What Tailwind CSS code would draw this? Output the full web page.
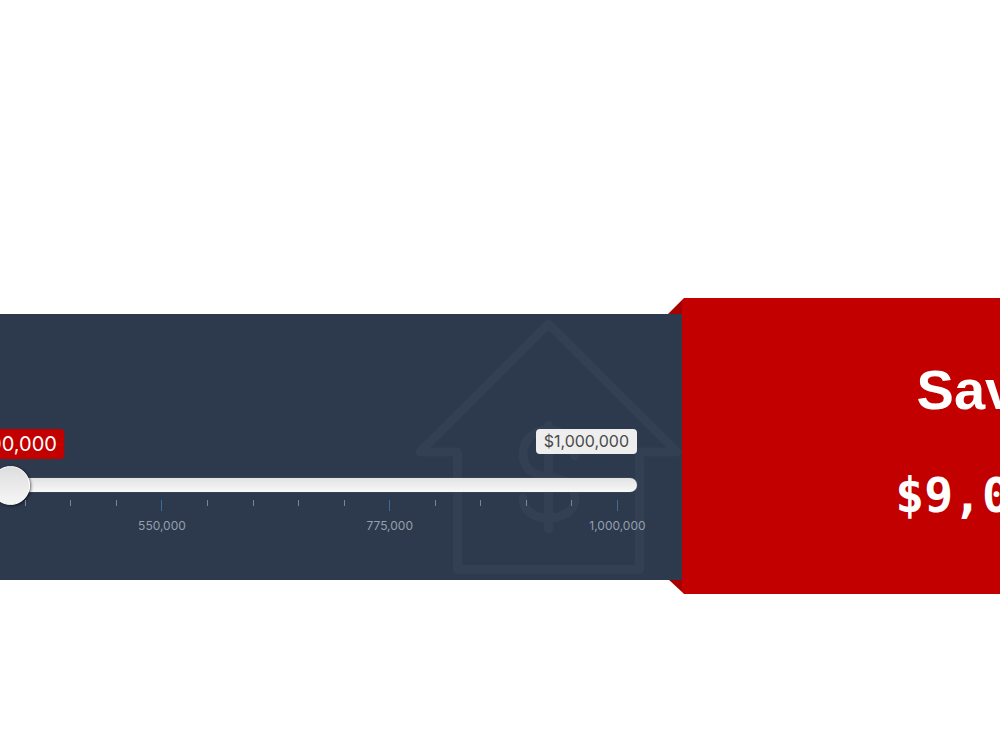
<!DOCTYPE html>
<html lang="en">
<head>
  <meta charset="UTF-8" />
  <meta name="viewport" content="width=device-width, initial-scale=1" />
  <title>Savings calculator</title>
  <script src="https://cdn.jsdelivr.net/npm/@tailwindcss/browser@4"></script>
</head>

<body class="bg-white font-['Inter',sans-serif]">
  <main class="min-h-screen overflow-hidden pt-[298px]">
    <div class="grid grid-cols-[682fr_318fr]">

      <!-- Slider panel -->
      <section class="relative z-10 my-4 -mb-px min-w-0 self-start bg-[#2d394c]">
        <div class="relative flex justify-end overflow-hidden pt-[115px] pr-[45px] pb-[46px]">
          <!-- House watermark -->
          <svg class="absolute top-0 right-0 h-[266px] w-[272px]" viewBox="410 314 272 266" fill="none" stroke="#333f52" stroke-width="9" stroke-linecap="round" stroke-linejoin="round" aria-hidden="true">
            <path d="M457.5 452H420L548.500 324L677 452H639.500V569.500H457.500Z" />
            <path d="M548.500 425V529M575 456C575 440 563 430 548.500 430C534 430 523 440 523 454C523 470 534 475 548.500 477C564 479 575 484 575 499C575 511 563 518 548.500 518C534 518 523 511 523 498" />
          </svg>

          <div class="relative w-[950px] shrink-0">
            <div class="flex h-[49px] items-start justify-end">
              <output id="current" for="price" class="absolute -translate-x-1/2 rounded bg-[#c20000] px-[7px] text-xl leading-[30px] text-white">$400,000</output>
              <span class="rounded bg-[#eee] px-2 text-base leading-[25px] text-[#4a4a4a]">$1,000,000</span>
            </div>
            <label for="price" class="sr-only">Sale price</label>
            <input id="price" type="range" min="100000" max="1000000" step="5000" value="400000"
                   class="block h-[14px] w-full cursor-pointer appearance-none rounded-full bg-linear-to-b from-[#e2e2e2] to-[#f8f8f8] shadow-[0_0_1px_#999] [&::-webkit-slider-thumb]:size-[39px] [&::-webkit-slider-thumb]:appearance-none [&::-webkit-slider-thumb]:rounded-full [&::-webkit-slider-thumb]:border [&::-webkit-slider-thumb]:border-white [&::-webkit-slider-thumb]:bg-linear-to-b [&::-webkit-slider-thumb]:from-[#dedede] [&::-webkit-slider-thumb]:to-[#f6f6f6] [&::-webkit-slider-thumb]:shadow-[1px_1px_3px_#0009]" />
            <div id="ticks" class="mx-[19px] mt-2 flex h-[34px] justify-between"></div>
          </div>
        </div>
      </section>

      <!-- Savings panel -->
      <section class="relative min-w-0">
        <svg class="absolute top-0 right-full h-4 w-[14px]" viewBox="0 0 14 16" aria-hidden="true"><path d="M0 16L14 2V16Z" fill="#a60000" /></svg>
        <svg class="absolute right-full bottom-0 h-[15px] w-[14px]" viewBox="0 0 14 15" aria-hidden="true"><path d="M0 0H14V13Z" fill="#a60000" /></svg>
        <div class="w-[600px] bg-[#c20000] pt-[60px] pb-[67px] text-center text-white [clip-path:polygon(2px_0,100%_0,100%_100%,2px_100%,0_calc(100%_-_2px),0_2px)]">
          <h2 class="font-['Liberation_Sans',sans-serif] text-[56px] leading-16 font-bold">Save</h2>
          <p class="mt-[41px] font-['DejaVu_Sans_Mono',monospace] text-5xl leading-16 font-bold" id="savings">$9,000</p>
        </div>
      </section>
    </div>
  </main>

  <script>
    const price = document.getElementById("price");
    const current = document.getElementById("current");
    const ticks = document.getElementById("ticks");
    const min = 100000, max = 1000000, thumb = 39;

    // 20 steps, every fifth one is labelled
    for (let i = 0; i <= 20; i++) {
      const value = min + (max - min) * i / 20;
      ticks.innerHTML += i % 5
        ? '<span class="h-[6px] w-px bg-[#7b8492]"></span>'
        : '<span class="flex w-px flex-col items-center"><i class="h-[11px] w-px shrink-0 bg-[#3c6a9c]"></i><span class="mt-[7px] text-xs leading-4 text-[#93a0ad]">' + value.toLocaleString("en-US") + '</span></span>';
    }

    function update() {
      const ratio = (price.value - min) / (max - min);
      current.textContent = "$" + Number(price.value).toLocaleString("en-US");
      current.style.left = thumb / 2 + ratio * (950 - thumb) + "px";
    }
    price.addEventListener("input", update);
    update();
  </script>
</body>
</html>
